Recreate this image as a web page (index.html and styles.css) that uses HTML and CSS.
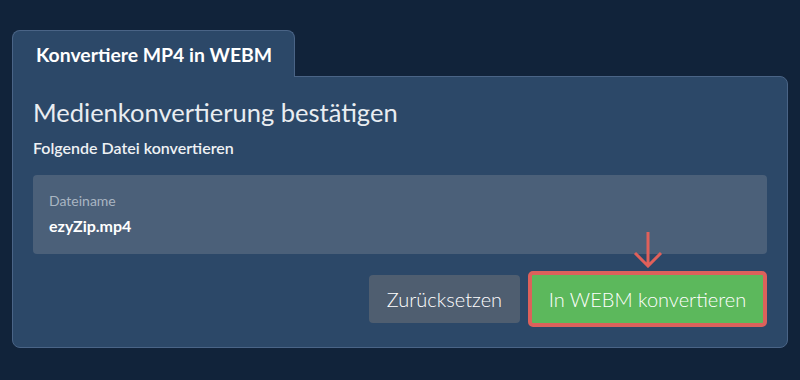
FILE: index.html
```html
<!DOCTYPE html>
<html lang="de">
<head>
    <meta charset="UTF-8">
    <meta name="viewport" content="width=device-width, initial-scale=1.0">
    <title>Konvertiere MP4 in WEBM</title>
    <link rel="stylesheet" href="styles.css">
</head>
<body>

    <div class="converter">
        <!-- Tab header -->
        <div class="tab">Konvertiere MP4 in WEBM</div>

        <!-- Panel -->
        <div class="panel">
            <h2 class="panel-title">Medienkonvertierung bestätigen</h2>
            <p class="panel-sub">Folgende Datei konvertieren</p>

            <div class="file-box">
                <span class="file-label">Dateiname</span>
                <span class="file-name">ezyZip.mp4</span>
            </div>

            <div class="actions">
                <button class="btn btn-reset">Zurücksetzen</button>
                <div class="convert-wrap">
                    <svg class="hint-arrow" width="30" height="36" viewBox="0 0 30 36">
                        <path d="M15 0 V34 M2 21 L15 34 L28 21" fill="none" stroke="#e0605a" stroke-width="3"/>
                    </svg>
                    <button class="btn btn-convert">In WEBM konvertieren</button>
                </div>
            </div>
        </div>
    </div>

</body>
</html>
```

FILE: styles.css
```css
/* General Body Styles */
body {
    font-family: Lato, "Open Sans", sans-serif;
    background-color: #11233a;
    margin: 0;
    padding: 30px 12px 0 12px;
    color: #eef1f4;
}

/* Tab */
.converter {
    width: 776px;
}

.tab {
    display: inline-block;
    position: relative;
    z-index: 1;
    background-color: #2c4868;
    border: 1px solid #4a6486;
    border-bottom: none;
    border-radius: 8px 8px 0 0;
    padding: 12px 22px 11px 23px;
    margin-bottom: -1px;
    font-size: 19.4px;
    font-weight: bold;
    color: #ffffff;
}

/* Panel */
.panel {
    background-color: #2c4868;
    border: 1px solid #4a6486;
    border-radius: 0 8px 8px 8px;
    padding: 20px 20px 20px 20px;
}

.panel-title {
    font-size: 25.5px;
    font-weight: normal;
    margin: 0 0 11px 0;
    color: #e9edf1;
}

.panel-sub {
    font-size: 16px;
    font-weight: 600;
    margin: 0 0 18px 0;
    color: #eef1f4;
}

/* File name box */
.file-box {
    background-color: #4b6079;
    border-radius: 4px;
    padding: 17px 16px 19px 16px;
    display: flex;
    flex-direction: column;
    gap: 7px;
}

.file-label {
    font-size: 14px;
    color: #a9b5c2;
}

.file-name {
    font-size: 16px;
    font-weight: bold;
    color: #ffffff;
}

/* Buttons */
.actions {
    display: flex;
    justify-content: flex-end;
    align-items: center;
    gap: 8px;
    margin-top: 17px;
}

.btn {
    font-family: Lato, "Open Sans", sans-serif;
    font-size: 20px;
    font-weight: 300;
    color: #ffffff;
    border: none;
    border-radius: 4px;
    cursor: pointer;
    height: 48px;
    padding: 0 14px;
}

.btn-reset {
    background-color: #4f5e70;
    width: 151px;
}

.convert-wrap {
    position: relative;
}

.btn-convert {
    background-color: #5cb85c;
    border: 4px solid #dc615b;
    height: 56px;
    width: 239px;
    border-radius: 5px;
}

.hint-arrow {
    position: absolute;
    left: 105px;
    top: -39px;
}
```
